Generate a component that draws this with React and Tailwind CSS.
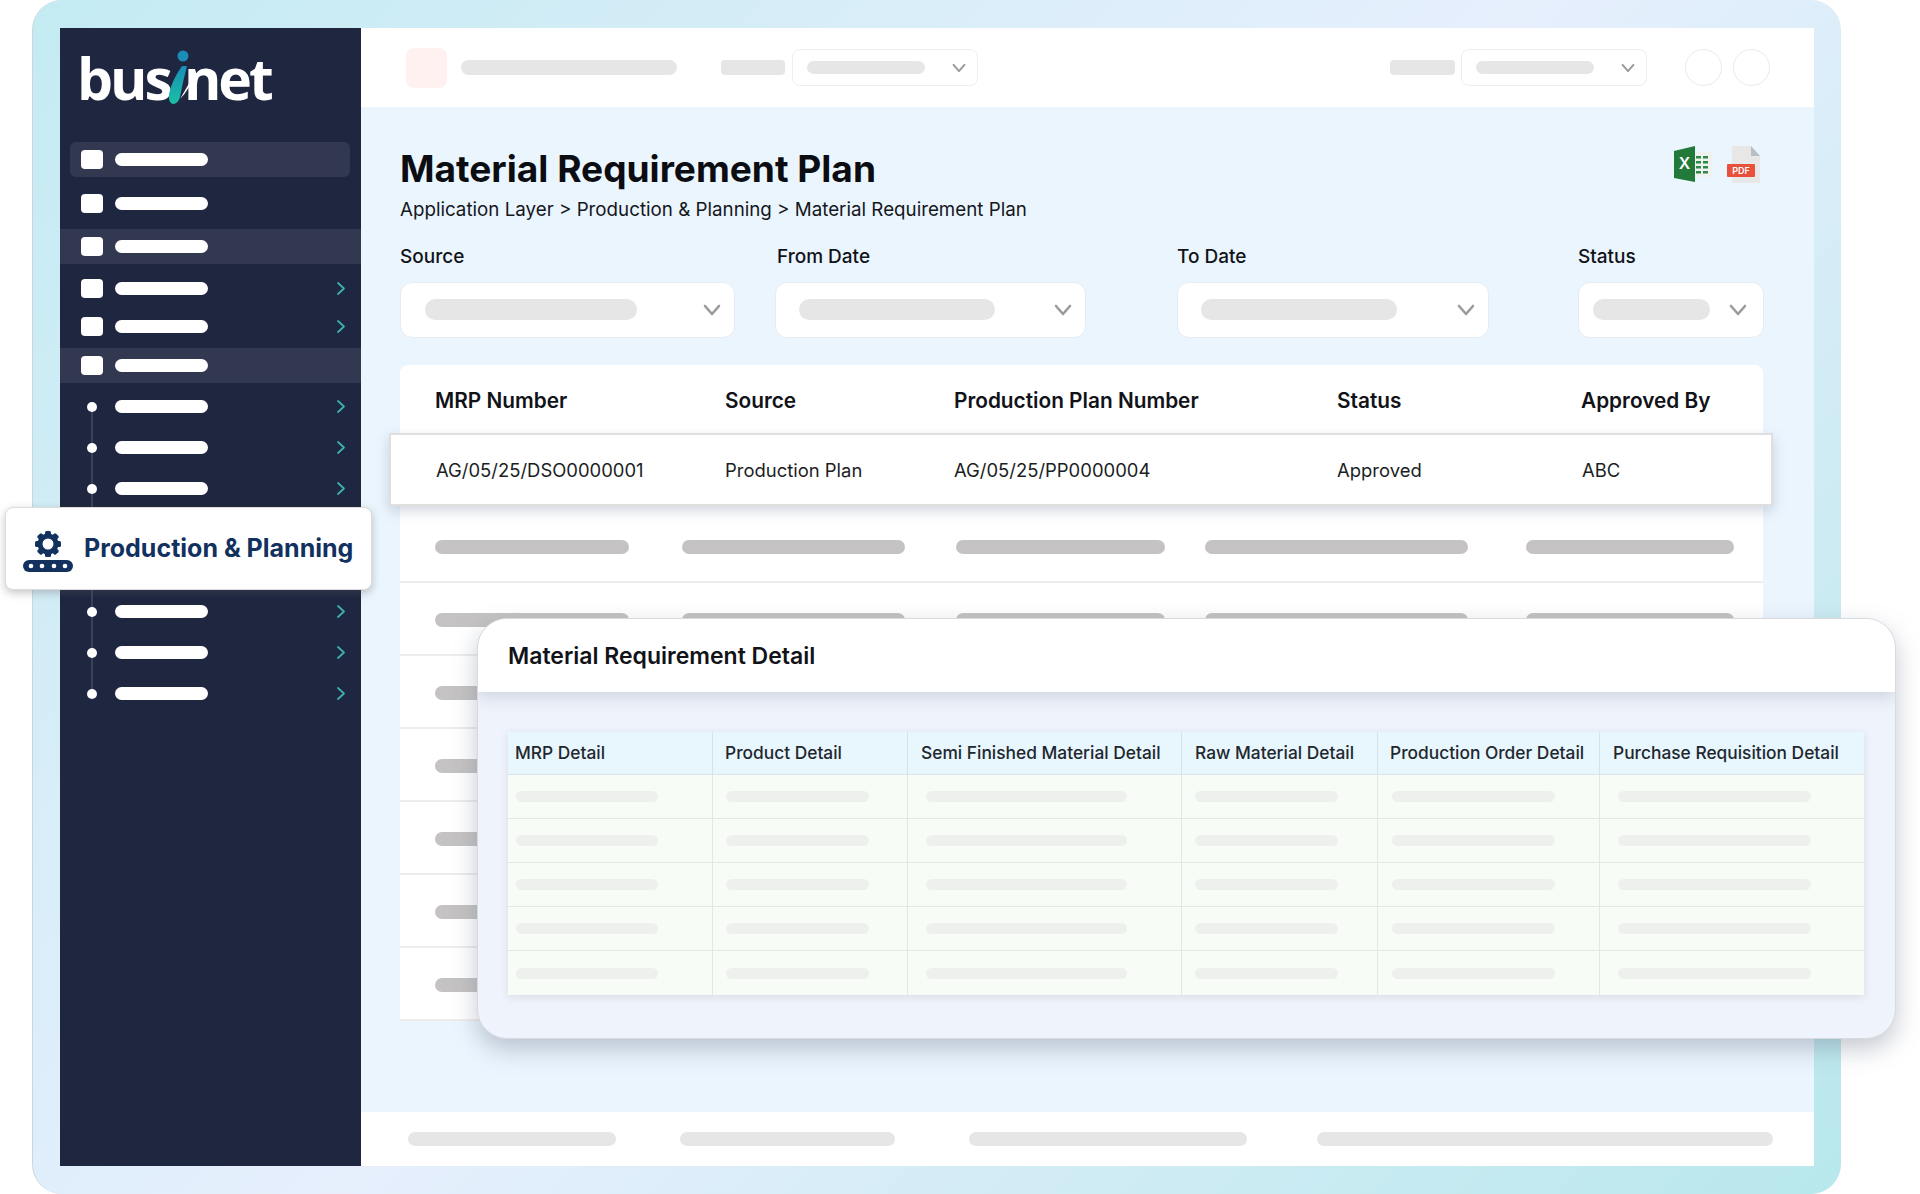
const topItems = [
    { margin: "mt-0", shade: "mx-[10px] w-[280px] rounded-md bg-[#323850] pl-[11px]", arrow: false },
    { margin: "mt-[9px]", shade: "pl-[21px]", arrow: false },
    { margin: "mt-[8px]", shade: "bg-[#323850] pl-[21px]", arrow: false },
    { margin: "mt-[7px]", shade: "pl-[21px]", arrow: true },
    { margin: "mt-[3px]", shade: "pl-[21px]", arrow: true },
    { margin: "mt-[4px]", shade: "bg-[#323850] pl-[21px]", arrow: false },
];

const subItems = [0, 1, 2, 3, 4, 5, 6, 7];

const mainRows = [0, 1, 2, 3, 4, 5, 6];

const headColumns = [
    "MRP Number",
    "Source",
    "Production Plan Number",
    "Status",
    "Approved By",
];

const rowValues = [
    "AG/05/25/DSO0000001",
    "Production Plan",
    "AG/05/25/PP0000004",
    "Approved",
    "ABC",
];

const detailColumns = [
    { title: "MRP Detail", head: "pl-[7px]", cell: "pl-[8px]", bar: "w-[142px]" },
    { title: "Product Detail", head: "pl-[12px]", cell: "pl-[13px]", bar: "w-[143px]" },
    { title: "Semi Finished Material Detail", head: "pl-[13px]", cell: "pl-[18px]", bar: "w-[201px]" },
    { title: "Raw Material Detail", head: "pl-[13px]", cell: "pl-[13px]", bar: "w-[143px]" },
    { title: "Production Order Detail", head: "pl-[12px]", cell: "pl-[14px]", bar: "w-[163px]" },
    { title: "Purchase Requisition Detail", head: "pl-[13px]", cell: "pl-[18px]", bar: "w-[193px]" },
];

const detailGrid =
    "grid grid-cols-[205px_195px_274px_196px_222px_264px]";

const Chevron = ({ className }) => (
    <svg viewBox="0 0 18 12" className={className} fill="none">
        <polyline
            points="2,2 9,10 16,2"
            stroke="#9b9b9b"
            strokeWidth="2.6"
            strokeLinecap="round"
            strokeLinejoin="round"
        />
    </svg>
);

const Arrow = () => (
    <svg viewBox="0 0 8 13" className="absolute left-[277px] h-[13px] w-[8px]" fill="none">
        <polyline
            points="1,1 7,6.5 1,12"
            stroke="#3db4ac"
            strokeWidth="1.7"
            strokeLinecap="round"
            strokeLinejoin="round"
        />
    </svg>
);

const Logo = () => (
    <div className="flex h-[114px] items-start pl-[17px] pt-[17px] font-['Open_Sans',sans-serif] text-[57px] leading-[66px] font-bold tracking-[-3px] text-white">
        <span>bus</span>
        <svg viewBox="0 0 35 60" className="mt-[2px] -ml-[5px] -mr-[16px] h-[60px] w-[35px] shrink-0">
            <defs>
                <linearGradient id="logoStem" x1="0" y1="0" x2="0" y2="1">
                    <stop offset="0" stopColor="#1a8db8" />
                    <stop offset="1" stopColor="#1ac0a5" />
                </linearGradient>
            </defs>
            <circle cx="18" cy="9" r="5.5" fill="#1a8db8" />
            <path d="M17 19 L22 19 Q18 34 15 50 Q13 57 8 57 Q3 56 4 47 Q7 33 17 19Z" fill="url(#logoStem)" />
            <path d="M15 52 Q22 40 31 24 Q25 42 15 52Z" fill="#ffffff" />
        </svg>
        <span>net</span>
    </div>
);

const Sidebar = () => (
    <aside className="w-[301px] shrink-0 bg-[#1e2640]">
        <Logo />
        {topItems.map((item, i) => (
            <div key={i} className={`${item.margin}`}>
                <div className={`relative flex h-[35px] items-center ${item.shade}`}>
                    <span className="h-[19px] w-[22px] rounded-[4px] bg-white" />
                    <span className="ml-[12px] h-[13px] w-[93px] rounded-full bg-white" />
                    {item.arrow && <Arrow />}
                </div>
            </div>
        ))}
        <div className="relative mt-[3px]">
            <span className="absolute left-[31px] top-[20px] h-[287px] w-[2px] bg-[#3a415a]" />
            {subItems.map((i) => (
                <div key={i} className="relative flex h-[41px] items-center pl-[27px]">
                    <span className="h-[10px] w-[10px] rounded-full bg-white" />
                    <span className="ml-[18px] h-[13px] w-[93px] rounded-full bg-white" />
                    <Arrow />
                </div>
            ))}
        </div>
    </aside>
);

const HeaderSelect = () => (
    <div className="flex h-[37px] w-[186px] items-center justify-between rounded-lg border border-[#eceeef] pl-[14px] pr-[11px]">
        <span className="h-[13px] w-[118px] rounded-full bg-[#e6e6e6]" />
        <Chevron className="h-[10px] w-[14px]" />
    </div>
);

const TopBar = () => (
    <header className="flex h-[79px] items-center bg-white pl-[45px]">
        <span className="h-[40px] w-[41px] rounded-lg bg-[#fff1f0]" />
        <span className="ml-[14px] h-[15px] w-[216px] rounded-full bg-[#e6e6e6]" />
        <span className="ml-[44px] h-[15px] w-[64px] rounded-sm bg-[#e6e6e6]" />
        <span className="ml-[7px]">
            <HeaderSelect />
        </span>
        <span className="ml-[412px] h-[15px] w-[65px] rounded-sm bg-[#e6e6e6]" />
        <span className="ml-[6px]">
            <HeaderSelect />
        </span>
        <span className="ml-[38px] h-[37px] w-[37px] rounded-full border border-[#e9eaec]" />
        <span className="ml-[11px] h-[37px] w-[37px] rounded-full border border-[#e9eaec]" />
    </header>
);

const ExportIcons = () => (
    <div className="mr-[3px] flex items-start gap-[15px]">
        <svg viewBox="0 0 38 36" className="h-[36px] w-[38px]">
            <rect x="20" y="6" width="18" height="25" fill="#eef1ee" />
            <polygon points="0,5 21,0 21,36 0,32" fill="#217a3a" />
            <text x="10.5" y="23" textAnchor="middle" fontFamily="Inter, sans-serif" fontSize="16" fontWeight="600" fill="#ffffff">
                X
            </text>
            <rect x="22" y="10" width="5" height="2.5" fill="#2c8a48" />
            <rect x="29" y="10" width="5" height="2.5" fill="#2c8a48" />
            <rect x="22" y="15" width="5" height="2.5" fill="#2c8a48" />
            <rect x="29" y="15" width="5" height="2.5" fill="#2c8a48" />
            <rect x="22" y="20" width="5" height="2.5" fill="#2c8a48" />
            <rect x="29" y="20" width="5" height="2.5" fill="#2c8a48" />
            <rect x="22" y="25" width="5" height="2.5" fill="#2c8a48" />
            <rect x="29" y="25" width="5" height="2.5" fill="#2c8a48" />
        </svg>
        <svg viewBox="0 0 33 37" className="h-[37px] w-[33px]">
            <polygon points="5,0 24,0 33,10 33,37 5,37" fill="#e7e7e8" />
            <polygon points="24,0 33,10 24,10" fill="#b9bdc6" />
            <rect x="0" y="18" width="28" height="13" rx="1" fill="#e8503c" />
            <text x="14" y="28" textAnchor="middle" fontFamily="Inter, sans-serif" fontSize="9" fontWeight="600" fill="#ffffff">
                PDF
            </text>
        </svg>
    </div>
);

const FilterSelect = ({ label, width, bar, margin, labelPad, boxPad }) => (
    <div className={`${width} ${margin} shrink-0`}>
        <div className={`text-[19px] leading-[24px] font-medium text-[#111318] ${labelPad}`}>{label}</div>
        <div className={`mt-[13px] flex h-[56px] items-center justify-between rounded-xl border border-[#e6ecf2] bg-white pb-[1px] ${boxPad}`}>
            <span className={`h-[21px] ${bar} rounded-full bg-[#e6e6e6]`} />
            <Chevron className="h-[12px] w-[18px]" />
        </div>
    </div>
);

const MainTable = () => (
    <div className="mt-[27px] rounded-t-lg bg-white">
        <div className="grid h-[68px] grid-cols-[290px_229px_383px_244px_1fr] items-center pl-[35px] pt-[3px] text-[20.8px] font-semibold text-[#111318]">
            {headColumns.map((name) => (
                <div key={name}>{name}</div>
            ))}
        </div>
        <div className="relative z-10 -ml-[11px] -mr-[10px] grid h-[73px] grid-cols-[289px_229px_383px_245px_1fr] items-center border-2 border-[#dfdfe0] bg-white pl-[45px] pt-[2px] text-[18.45px] text-[#1b1e24] shadow-[0_5px_12px_rgba(130,140,160,0.35)]">
            {rowValues.map((value) => (
                <div key={value}>{value}</div>
            ))}
        </div>
        {mainRows.map((i) => (
            <div
                key={i}
                className={`flex items-center border-b-2 border-[#ececec] ${i === 0 ? "h-[77px] pt-[6px]" : "h-[73px] pt-[2px]"}`}
            >
                <span className="ml-[35px] h-[14px] w-[194px] rounded-full bg-[#c4c2c2]" />
                <span className="ml-[53px] h-[14px] w-[223px] rounded-full bg-[#c4c2c2]" />
                <span className="ml-[51px] h-[14px] w-[209px] rounded-full bg-[#c4c2c2]" />
                <span className="ml-[40px] h-[14px] w-[263px] rounded-full bg-[#c4c2c2]" />
                <span className="ml-[58px] h-[14px] w-[208px] rounded-full bg-[#c4c2c2]" />
            </div>
        ))}
    </div>
);

const Footer = () => (
    <footer className="mt-auto flex h-[54px] items-center bg-white">
        <span className="ml-[47px] h-[14px] w-[208px] rounded-full bg-[#e6e6e6]" />
        <span className="ml-[64px] h-[14px] w-[215px] rounded-full bg-[#e6e6e6]" />
        <span className="ml-[74px] h-[14px] w-[278px] rounded-full bg-[#e6e6e6]" />
        <span className="ml-[70px] h-[14px] w-[456px] rounded-full bg-[#e6e6e6]" />
    </footer>
);

const ProductionChip = () => (
    <div className="absolute left-[5px] top-[507px] z-20 flex h-[83px] w-[367px] items-center rounded-lg border border-[#dcdcdc] bg-white pl-[17px] shadow-[0_3px_8px_rgba(90,90,90,0.35)]">
        <svg viewBox="0 0 50 41" className="mt-[6px] h-[41px] w-[50px] shrink-0">
            <g fill="#12315f">
                {[0, 45, 90, 135, 180, 225, 270, 315].map((deg) => (
                    <rect key={deg} x="22" y="0" width="6" height="7" rx="1.5" transform={`rotate(${deg} 25 13)`} />
                ))}
            </g>
            <circle cx="25" cy="13" r="8" fill="none" stroke="#12315f" strokeWidth="5" />
            <rect x="0" y="29" width="50" height="12" rx="6" fill="#12315f" />
            {[8, 19, 31, 42].map((x) => (
                <circle key={x} cx={x} cy="35" r="2.3" fill="#ffffff" />
            ))}
        </svg>
        <span className="ml-[11px] whitespace-nowrap pt-[1px] text-[25px] font-bold text-[#12315f]">
            Production &amp; Planning
        </span>
    </div>
);

const DetailPanel = () => (
    <div className="absolute left-[477px] top-[618px] z-30 h-[421px] w-[1419px] overflow-hidden rounded-[30px] border border-[#d8dadd] bg-[#eff3fb] shadow-[0_10px_24px_rgba(110,120,140,0.4)]">
        <div className="relative flex h-[73px] items-center bg-white pl-[30px] pt-[2px] text-[23px] font-semibold text-[#111318] shadow-[0_6px_14px_rgba(120,130,150,0.25)]">
            Material Requirement Detail
        </div>
        <div className="ml-[30px] mt-[40px] w-[1356px] shadow-[0_2px_8px_rgba(120,130,150,0.2)]">
            <div className={`${detailGrid} h-[43px] border-b border-[#dce2e5] bg-[#e8f6fd]`}>
                {detailColumns.map((col) => (
                    <div
                        key={col.title}
                        className={`flex items-center whitespace-nowrap border-r border-[#d9e1e6] text-[17.35px] font-medium text-[#22272e] last:border-r-0 ${col.head}`}
                    >
                        {col.title}
                    </div>
                ))}
            </div>
            {[0, 1, 2, 3, 4].map((row) => (
                <div key={row} className={`${detailGrid} h-[44px] border-b border-[#e3e8e3] bg-[#f7fdf6] last:border-b-0`}>
                    {detailColumns.map((col) => (
                        <div
                            key={col.title}
                            className={`flex items-center border-r border-[#e3e8e3] last:border-r-0 ${col.cell}`}
                        >
                            <span className={`h-[11px] rounded-full bg-[#eef0ee] ${col.bar}`} />
                        </div>
                    ))}
                </div>
            ))}
        </div>
    </div>
);

export default function App() {
    return (
        <div className="relative h-[1194px] w-[1920px] overflow-hidden bg-white font-['Inter',sans-serif]">
            <div className="ml-[32px] flex h-full w-[1809px] rounded-[30px] border-l border-[#c9d6dc] bg-[linear-gradient(135deg,#c4ebf2_0%,#e7effd_50%,#b8e8ec_100%)] py-[28px] pl-[27px] pr-[27px]">
                <Sidebar />
                <div className="flex min-w-0 flex-1 flex-col bg-[#ebf5fe]">
                    <TopBar />
                    <main className="pl-[39px] pr-[51px] pt-[39px]">
                        <div className="flex items-start justify-between">
                            <div>
                                <h1 className="text-[37.1px] leading-[46px] font-bold text-[#0b0d12]">
                                    Material Requirement Plan
                                </h1>
                                <div className="mt-[6px] text-[18.75px] leading-[24px] text-[#14171c]">
                                    Application Layer &gt; Production &amp; Planning &gt; Material Requirement Plan
                                </div>
                            </div>
                            <ExportIcons />
                        </div>
                        <div className="mt-[23px] flex">
                            <FilterSelect label="Source" width="w-[335px]" bar="w-[212px]" margin="ml-0" labelPad="pl-0" boxPad="pl-[24px] pr-[13px]" />
                            <FilterSelect label="From Date" width="w-[311px]" bar="w-[196px]" margin="ml-[40px]" labelPad="pl-[2px]" boxPad="pl-[23px] pr-[13px]" />
                            <FilterSelect label="To Date" width="w-[312px]" bar="w-[196px]" margin="ml-[91px]" labelPad="pl-0" boxPad="pl-[23px] pr-[13px]" />
                            <FilterSelect label="Status" width="w-[186px]" bar="w-[117px]" margin="ml-[89px]" labelPad="pl-0" boxPad="pl-[14px] pr-[16px]" />
                        </div>
                        <MainTable />
                    </main>
                    <Footer />
                </div>
            </div>
            <ProductionChip />
            <DetailPanel />
        </div>
    );
}
